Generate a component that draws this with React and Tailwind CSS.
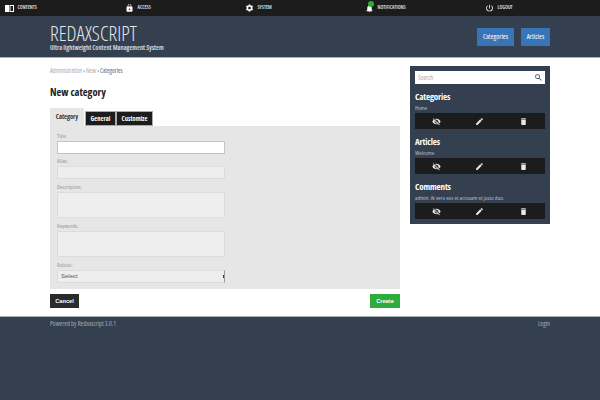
import { MdDelete, MdEdit, MdLock, MdPowerSettingsNew, MdSearch, MdSettings, MdVisibilityOff, MdNotifications } from "react-icons/md";

const font = "font-['Open_Sans','Liberation_Sans',sans-serif]";
const narrow = "font-['Open_Sans','Liberation_Sans',sans-serif] [font-stretch:75%]";
const arial = "font-['Liberation_Sans',sans-serif]";

const navItems = [
  { label: "Contents", icon: <BookIcon /> },
  { label: "Access", icon: <MdLock className="text-[10px] text-white" /> },
  { label: "System", icon: <MdSettings className="text-[10px] text-white" /> },
  { label: "Notifications", icon: <BellBadge /> },
  { label: "Logout", icon: <MdPowerSettingsNew className="text-[10px] text-white" /> },
];

function BookIcon() {
  return (
    <svg width="9" height="7" viewBox="0 0 9 7">
      <rect x="0" y="0" width="4" height="7" fill="#fff" />
      <rect x="5" y="0.5" width="3.5" height="6" fill="none" stroke="#fff" />
    </svg>
  );
}

function BellBadge() {
  return (
    <span className="relative flex">
      <MdNotifications className="text-[9px] text-white" />
      <span className="absolute -top-[3px] left-[3px] w-[6px] h-[6px] rounded-full bg-[#2ead3c]" />
    </span>
  );
}

function ActionBar() {
  return (
    <div className="h-[16px] bg-[#1c1c1c] grid grid-cols-3 items-center text-[#e8e8e8]">
      <span className="flex justify-center"><MdVisibilityOff className="text-[9px]" /></span>
      <span className="flex justify-center"><MdEdit className="text-[9px]" /></span>
      <span className="flex justify-center"><MdDelete className="text-[9px]" /></span>
    </div>
  );
}

function SideBlock({ title, text }) {
  return (
    <div className="mt-[7px]">
      <h3 className={`${narrow} font-bold text-[9px] leading-[12px] tracking-[-0.15px] text-white`}>{title}</h3>
      <p className={`${narrow} text-[6px] leading-[8px] text-[#b9bec4] mt-[1px] mb-[1px] whitespace-nowrap`}>{text}</p>
      <ActionBar />
    </div>
  );
}

function Field({ label, height = "h-[13px]", active }) {
  return (
    <div>
      <label className={`${narrow} block text-[6px] leading-[8px] text-[#999] mb-[1px]`}>{label}</label>
      <div className={`${height} w-[168px] border ${active ? "bg-white border-[#c4c4c4]" : "bg-[#eeeeee] border-[#dcdcdc]"}`} />
    </div>
  );
}

export default function App() {
  return (
    <div className={`${font} w-[600px] h-[400px] flex flex-col bg-white overflow-hidden`}>
      <nav className="h-[16px] bg-[#1c1c1c] flex">
        {navItems.map((item) => (
          <div key={item.label} className="w-[120px] flex items-center pl-[5px] gap-[3.5px]">
            <span className="w-[9px] flex justify-center">{item.icon}</span>
            <span className={`${narrow} text-[5px] font-semibold uppercase text-[#e8e8e8]`}>{item.label}</span>
          </div>
        ))}
      </nav>

      <header className="h-[42px] bg-[#34404f] border-b border-[#aab0b6] flex items-center justify-between px-[50px]">
        <div>
          <h1 className={`${narrow} text-[20.3px] leading-[22px] font-light text-[#e4e6e8]`}>REDAXSCRIPT</h1>
          <p className={`${narrow} text-[6.3px] leading-[8px] font-bold text-[#d0d3d7]`}>Ultra lightweight Content Management System</p>
        </div>
        <div className="flex gap-[7px] mt-[1px]">
          <a className={`${narrow} w-[37px] h-[18px] bg-[#3a74b8] text-white text-[7px] flex items-center justify-center`}>Categories</a>
          <a className={`${narrow} w-[29px] h-[18px] bg-[#3a74b8] text-white text-[7px] flex items-center justify-center`}>Articles</a>
        </div>
      </header>

      <main className="flex-1 flex pl-[50px] pt-[8px]">
        <section className="w-[350px]">
          <div className={`${narrow} text-[6.3px] leading-[8px] mt-[1px] text-[#666]`}>
            <span className="text-[#aaa]">Administration</span> › <span className="text-[#aaa]">New</span> › Categories
          </div>
          <h2 className={`${narrow} font-bold text-[10.5px] leading-[14px] text-[#222] mt-[10px]`}>New category</h2>
          <div className="flex items-end mt-[9px]">
            <div className={`${narrow} w-[34px] h-[18px] bg-[#e6e6e6] text-[6.5px] font-bold text-[#333] flex items-center justify-center`}>Category</div>
            <div className={`${narrow} w-[31px] h-[15px] bg-[#1c1c1c] border border-[#aaa] text-[6.5px] font-bold text-white flex items-center justify-center ml-[1px]`}>General</div>
            <div className={`${narrow} w-[37px] h-[15px] bg-[#1c1c1c] border border-[#aaa] text-[6.5px] font-bold text-white flex items-center justify-center`}>Customize</div>
          </div>
          <div className="bg-[#e6e6e6] h-[163px] px-[7px] pt-[6px] flex flex-col gap-[3.4px]">
            <Field label="Title:" active />
            <Field label="Alias:" />
            <Field label="Description:" height="h-[26.6px]" />
            <Field label="Keywords:" height="h-[26.6px]" />
            <div>
              <label className={`${narrow} block text-[6px] leading-[8px] text-[#999] mb-[1px]`}>Robots:</label>
              <div className={`${arial} relative h-[13px] w-[168px] bg-[#eeeeee] border border-[#dcdcdc] border-r-[#999] text-[6px] text-[#555] flex items-center pl-[3px]`}>
                Select
                <span className="absolute right-0 top-[4px] h-[3px] w-[1px] bg-[#333]" />
              </div>
            </div>
          </div>
          <div className="flex justify-between mt-[5px]">
            <button className={`${arial} w-[29px] h-[14px] bg-[#2b2b2b] text-white text-[5.7px] font-bold`}>Cancel</button>
            <button className={`${arial} w-[30px] h-[14px] bg-[#2ead3c] text-white text-[5.7px] font-bold`}>Create</button>
          </div>
        </section>

        <aside className="w-[140px] h-[158px] ml-[10px] bg-[#34404f] px-[5px] pt-[5px]">
          <div className="h-[13px] bg-white flex items-center justify-between pl-[3px] pr-[2px]">
            <span className={`${narrow} text-[6.5px] text-[#aaa]`}>Search</span>
            <MdSearch className="text-[9px] text-[#34404f]" />
          </div>
          <SideBlock title="Categories" text="Home" />
          <SideBlock title="Articles" text="Welcome" />
          <SideBlock title="Comments" text="admin: At vero eos et accusam et justo duo." />
        </aside>
      </main>

      <footer className="h-[84px] bg-[#34404f] border-t border-[#aab0b6] flex justify-between px-[50px] pt-[2px]">
        <span className={`${narrow} text-[6.5px] text-[#a4a9b0]`}>Powered by Redaxscript 3.0.1</span>
        <span className={`${narrow} text-[6.5px] text-[#a4a9b0]`}>Login</span>
      </footer>
    </div>
  );
}
